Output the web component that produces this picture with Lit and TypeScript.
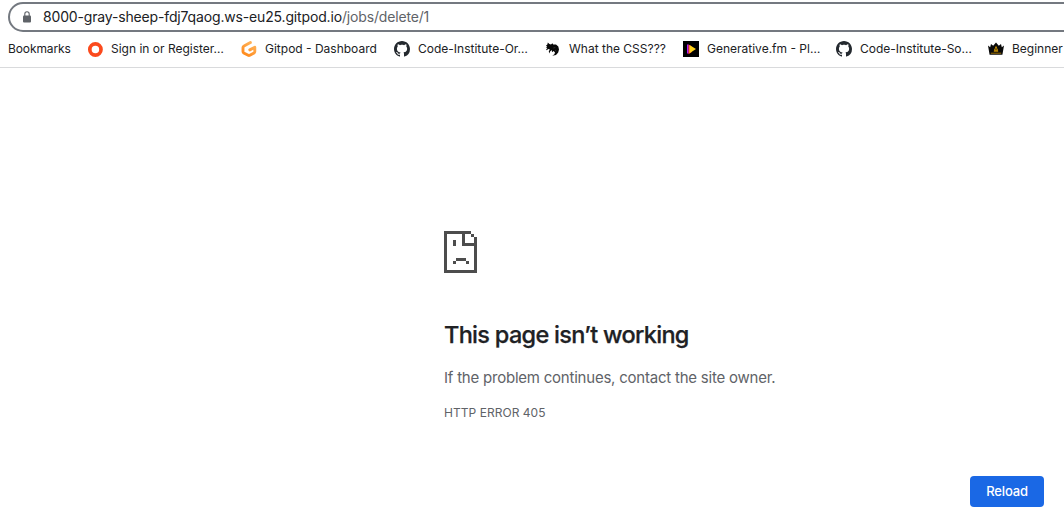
import { LitElement, html, svg, css } from "lit";
import { customElement } from "lit/decorators.js";

const github = svg`<svg viewBox="0 0 16 16"><path fill="#24292f" d="M8 0C3.58 0 0 3.58 0 8c0 3.54 2.29 6.53 5.47 7.59.4.07.55-.17.55-.38 0-.19-.01-.82-.01-1.49-2.01.37-2.53-.49-2.69-.94-.09-.23-.48-.94-.82-1.13-.28-.15-.68-.52-.01-.53.63-.01 1.08.58 1.23.82.72 1.21 1.87.87 2.33.66.07-.52.28-.87.51-1.07-1.78-.2-3.64-.89-3.64-3.95 0-.87.31-1.59.82-2.15-.08-.2-.36-1.02.08-2.12 0 0 .67-.21 2.2.82.64-.18 1.32-.27 2-.27s1.36.09 2 .27c1.53-1.04 2.2-.82 2.2-.82.44 1.1.16 1.92.08 2.12.51.56.82 1.27.82 2.15 0 3.07-1.87 3.75-3.65 3.95.29.25.54.73.54 1.48 0 1.07-.01 1.93-.01 2.2 0 .21.15.46.55.38A8.01 8.01 0 0 0 16 8c0-4.42-3.58-8-8-8z"/></svg>`;
const ring = svg`<svg viewBox="0 0 16 16"><circle cx="8.4" cy="8.5" r="5.6" fill="none" stroke="#fb4a1d" stroke-width="3.7"/></svg>`;
const gitpod = svg`<svg viewBox="0 0 16 16"><defs><linearGradient id="g" x1="0.8" y1="0" x2="0.2" y2="1"><stop offset="0" stop-color="#ffb45b"/><stop offset="1" stop-color="#ff8a1c"/></linearGradient></defs><path d="M9.4 1.5 3 5Q2 5.5 2 6.4V10.6Q2 11.4 2.8 11.9L7.2 14.3Q8 14.7 8.8 14.3L13 11.9Q13.8 11.4 13.8 10.6V6.2L8.8 8.9" fill="none" stroke="url(#g)" stroke-width="2.9" stroke-linecap="round" stroke-linejoin="round"/></svg>`;
const cat = svg`<svg viewBox="0 0 16 16"><path fill="#080808" d="M1 4.6 2.4 3.5 2.8 1.6 4.4 3 6 3.6 7.4 2.3 8.2 3.5 11 3.5 13.3 5.4 14 8.6 13.2 11.6 11 14 7.3 14.8 9.4 13.2 10 11.6 8.6 10 7 11.2 6.8 9.1 5.3 10.2 4.2 12.4 3.8 10.2 4.9 8.4 3.2 8 1.8 9.2 1.1 8.6 2.4 7 .8 6.3 2.2 5.6z"/><path d="m8.3 7 2-.5M10 9l1.3 1" stroke="#555" stroke-width=".5"/></svg>`;
const player = svg`<svg viewBox="0 0 16 16"><path fill="#000" d="M0 0h16v16H0z"/><path fill="#b51bff" d="M4 3.5h1.6v9H4z"/><path fill="#ff3a32" d="m5.5 3.5 3 1.8v6l-3 2z"/><path fill="#ffd21a" d="M6.5 4 13 8l-6.5 4.2z"/></svg>`;
const crown = svg`<svg viewBox="0 0 16 16"><path fill="#090909" d="M0 4.4 2.2 6.2 3 3 5.2 4.8 8 1.4 10.8 4.8 13 3 13.8 6.2 16 4.4 14.4 13.8H1.6z"/><path fill="#e8a600" d="m8 4.8 2.2 5H5.8z"/><circle cx="8" cy="8.1" r=".8" fill="#161000"/><path d="M2.8 12.2h10.4M5.8 10.4h4.4" stroke="#c58e00" stroke-width=".8"/></svg>`;
const lock = svg`<svg viewBox="0 0 8 12"><path fill="#5f6368" d="M1 4.5h6q1 0 1 1v5q0 1-1 1H1q-1 0-1-1v-5q0-1 1-1"/><path d="M1.8 5V2.9a2.2 2.2 0 0 1 4.4 0V5" fill="none" stroke="#5f6368" stroke-width="1.1"/></svg>`;

const bookmarks = [
  { icon: ring, label: "Sign in or Register…", width: 113 },
  { icon: gitpod, label: "Gitpod - Dashboard", width: 112 },
  { icon: github, label: "Code-Institute-Or…", width: 110 },
  { icon: cat, label: "What the CSS???", width: 97 },
  { icon: player, label: "Generative.fm - Pl…", width: 112 },
  { icon: github, label: "Code-Institute-So…", width: 111 },
  { icon: crown, label: "Beginner", width: 60 },
];

@customElement("app-root")
export class AppRoot extends LitElement {
  static styles = css`
    :host { display: block; width: 100%; height: 523px; overflow: hidden; background: #fff; font-family: Inter, "Liberation Sans", sans-serif; color: #202124; }
    svg { display: block; width: 100%; height: 100%; }
    .toolbar { height: 67px; border-bottom: 1px solid #d9dadc; overflow: hidden; }
    .address { box-sizing: border-box; height: 30px; margin: 2px -30px 0 8px; border: 2px solid #747980; border-radius: 15px; display: flex; align-items: center; padding-left: 13px; font-size: 14px; white-space: nowrap; }
    .lock { width: 8px; height: 12px; margin-right: 12px; }
    .url { letter-spacing: -0.16px; padding-bottom: 2px; }
    .path { color: #5f6368; }
    .bookmarks { display: flex; align-items: center; height: 34px; padding-left: 8px; gap: 17px; font-size: 12px; white-space: nowrap; }
    .folder { width: 62px; letter-spacing: -0.1px; padding-bottom: 2px; }
    .bookmark { display: flex; align-items: center; gap: 8px; flex: none; }
    .label { padding-bottom: 2px; }
    .icon { width: 16px; height: 16px; }
    .error { padding: 163px 0 0 444px; }
    .sad { width: 33px; height: 42px; }
    h1 { margin: 47px 0 0; font-size: 23.5px; line-height: 29px; font-weight: 500; letter-spacing: -0.7px; -webkit-text-stroke: 0.25px #202124; }
    p { margin: 18px 0 0; font-size: 15px; line-height: 22px; color: #5f6368; letter-spacing: -0.22px; }
    .code { margin-top: 15px; font-size: 12px; line-height: 18px; color: #5f6368; letter-spacing: 0.04px; }
    .actions { display: flex; justify-content: flex-end; padding: 54px 20px 0 0; }
    button { width: 74px; height: 31px; padding: 0 0 1px; border: 0; border-radius: 4px; background: #1a68e5; color: #fff; font: 500 13px Inter, sans-serif; letter-spacing: -0.15px; }
  `;

  render() {
    return html`
      <header class="toolbar">
        <div class="address"><span class="lock">${lock}</span><span class="url">8000-gray-sheep-fdj7qaog.ws-eu25.gitpod.io<span class="path">/jobs/delete/1</span></span></div>
        <nav class="bookmarks">
          <span class="folder">Bookmarks</span>
          ${bookmarks.map((b) => html`<span class="bookmark"><span class="icon">${b.icon}</span><span class="label" style="width:${b.width}px">${b.label}</span></span>`)}
        </nav>
      </header>
      <main>
        <section class="error">
          <div class="sad"><svg viewBox="0 0 33 42" shape-rendering="crispEdges"><path fill="#4d4d4d" d="M0 0H27V3H21V12H30V6H33V42H0ZM3 3V39H30V15H18V3ZM27 3H30V6H27ZM9 9H12V15H9ZM12 27H22V30H12ZM9 30H12V33H9ZM22 30H25V33H22Z" fill-rule="evenodd"/></svg></div>
          <h1>This page isn’t working</h1>
          <p>If the problem continues, contact the site owner.</p>
          <p class="code">HTTP ERROR 405</p>
        </section>
        <div class="actions"><button>Reload</button></div>
      </main>`;
  }
}
